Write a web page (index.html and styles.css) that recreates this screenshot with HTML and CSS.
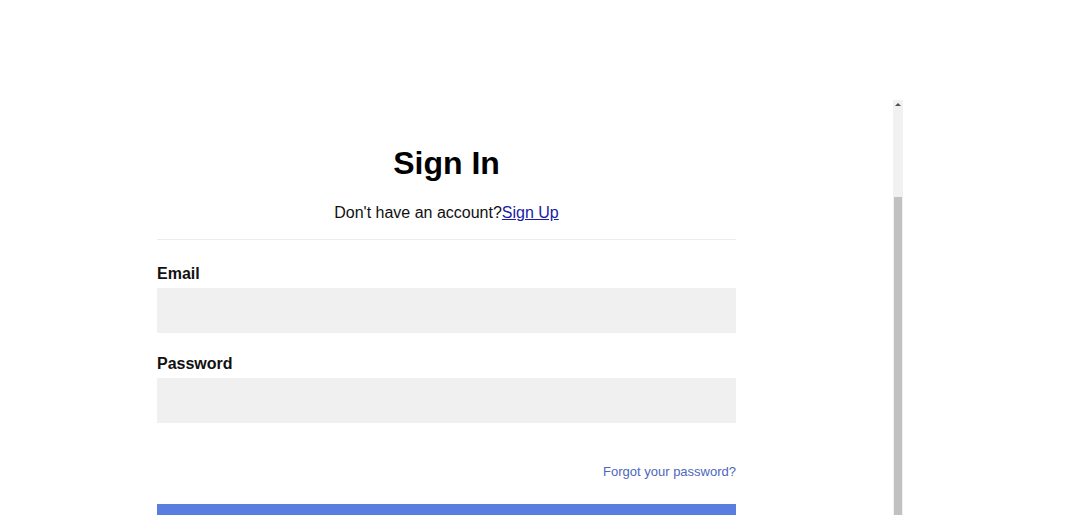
FILE: index.html
```html
<!DOCTYPE html>
<html lang="en">
<head>
<meta charset="utf-8">
<title>Sign In</title>
<link rel="stylesheet" href="styles.css">
</head>
<body>
<div class="page">
  <div class="frame">
    <div class="content">
      <form class="signin">
        <h1 class="title">Sign In</h1>
        <p class="subtitle">Don't have an account?<a href="#" class="signup">Sign Up</a></p>
        <div class="divider"></div>
        <label class="label" for="email">Email</label>
        <input class="field" id="email" type="email">
        <label class="label label-pw" for="password">Password</label>
        <input class="field" id="password" type="password">
        <div class="forgot-row"><a href="#" class="forgot">Forgot your password?</a></div>
        <button type="submit" class="submit">Sign In</button>
      </form>
    </div>
    <div class="scrollbar">
      <div class="track">
        <span class="arrow"></span>
      </div>
      <div class="thumb"></div>
    </div>
  </div>
</div>
</body>
</html>
```

FILE: styles.css
```css
* { box-sizing: border-box; }
html, body {
  margin: 0;
  padding: 0;
  background: #ffffff;
  overflow: hidden;
}
body {
  font-family: "Liberation Sans", Arial, sans-serif;
  color: #111;
  width: 1080px;
  height: 515px;
}
.page {
  padding-top: 100px;
  height: 515px;
  overflow: hidden;
}
.frame {
  display: flex;
  width: 903px;
  height: 415px;
  overflow: hidden;
}
.content {
  flex: 1;
  display: flex;
  justify-content: center;
  overflow: hidden;
}
.signin {
  width: 579px;
  display: flex;
  flex-direction: column;
  padding-top: 45px;
}
.signin > * {
  flex-shrink: 0;
}
.title {
  margin: 0;
  font-size: 32px;
  line-height: 36px;
  font-weight: 700;
  text-align: center;
  color: #000;
}
.subtitle {
  margin: 23px 0 0;
  font-size: 16px;
  line-height: 18px;
  text-align: center;
  color: #111;
}
.signup {
  color: #1a1aa6;
  text-decoration: underline;
}
.divider {
  margin-top: 17px;
  height: 1px;
  background: #ececec;
}
.label {
  display: block;
  margin-top: 25px;
  font-size: 16px;
  line-height: 18px;
  font-weight: 700;
  color: #111;
}
.label-pw {
  margin-top: 22px;
}
.field {
  display: block;
  margin-top: 5px;
  width: 100%;
  height: 45px;
  border: none;
  background: #f0f0f0;
  outline: none;
}
.forgot-row {
  margin-top: 40px;
  text-align: right;
  line-height: 15px;
}
.forgot {
  font-size: 13px;
  color: #4d67bd;
  text-decoration: none;
}
.submit {
  margin-top: 25px;
  height: 45px;
  border: none;
  background: #5a7de0;
  color: #fff;
  font-size: 16px;
}
.scrollbar {
  width: 10px;
  display: flex;
  flex-direction: column;
  background: #f1f1f1;
}
.track {
  height: 97px;
  display: flex;
  justify-content: center;
  padding-top: 3px;
}
.arrow {
  width: 0;
  height: 0;
  border-left: 3px solid transparent;
  border-right: 3px solid transparent;
  border-bottom: 3px solid #505050;
}
.thumb {
  flex: 1;
  margin: 0 1px;
  background: #c1c1c1;
}
```
